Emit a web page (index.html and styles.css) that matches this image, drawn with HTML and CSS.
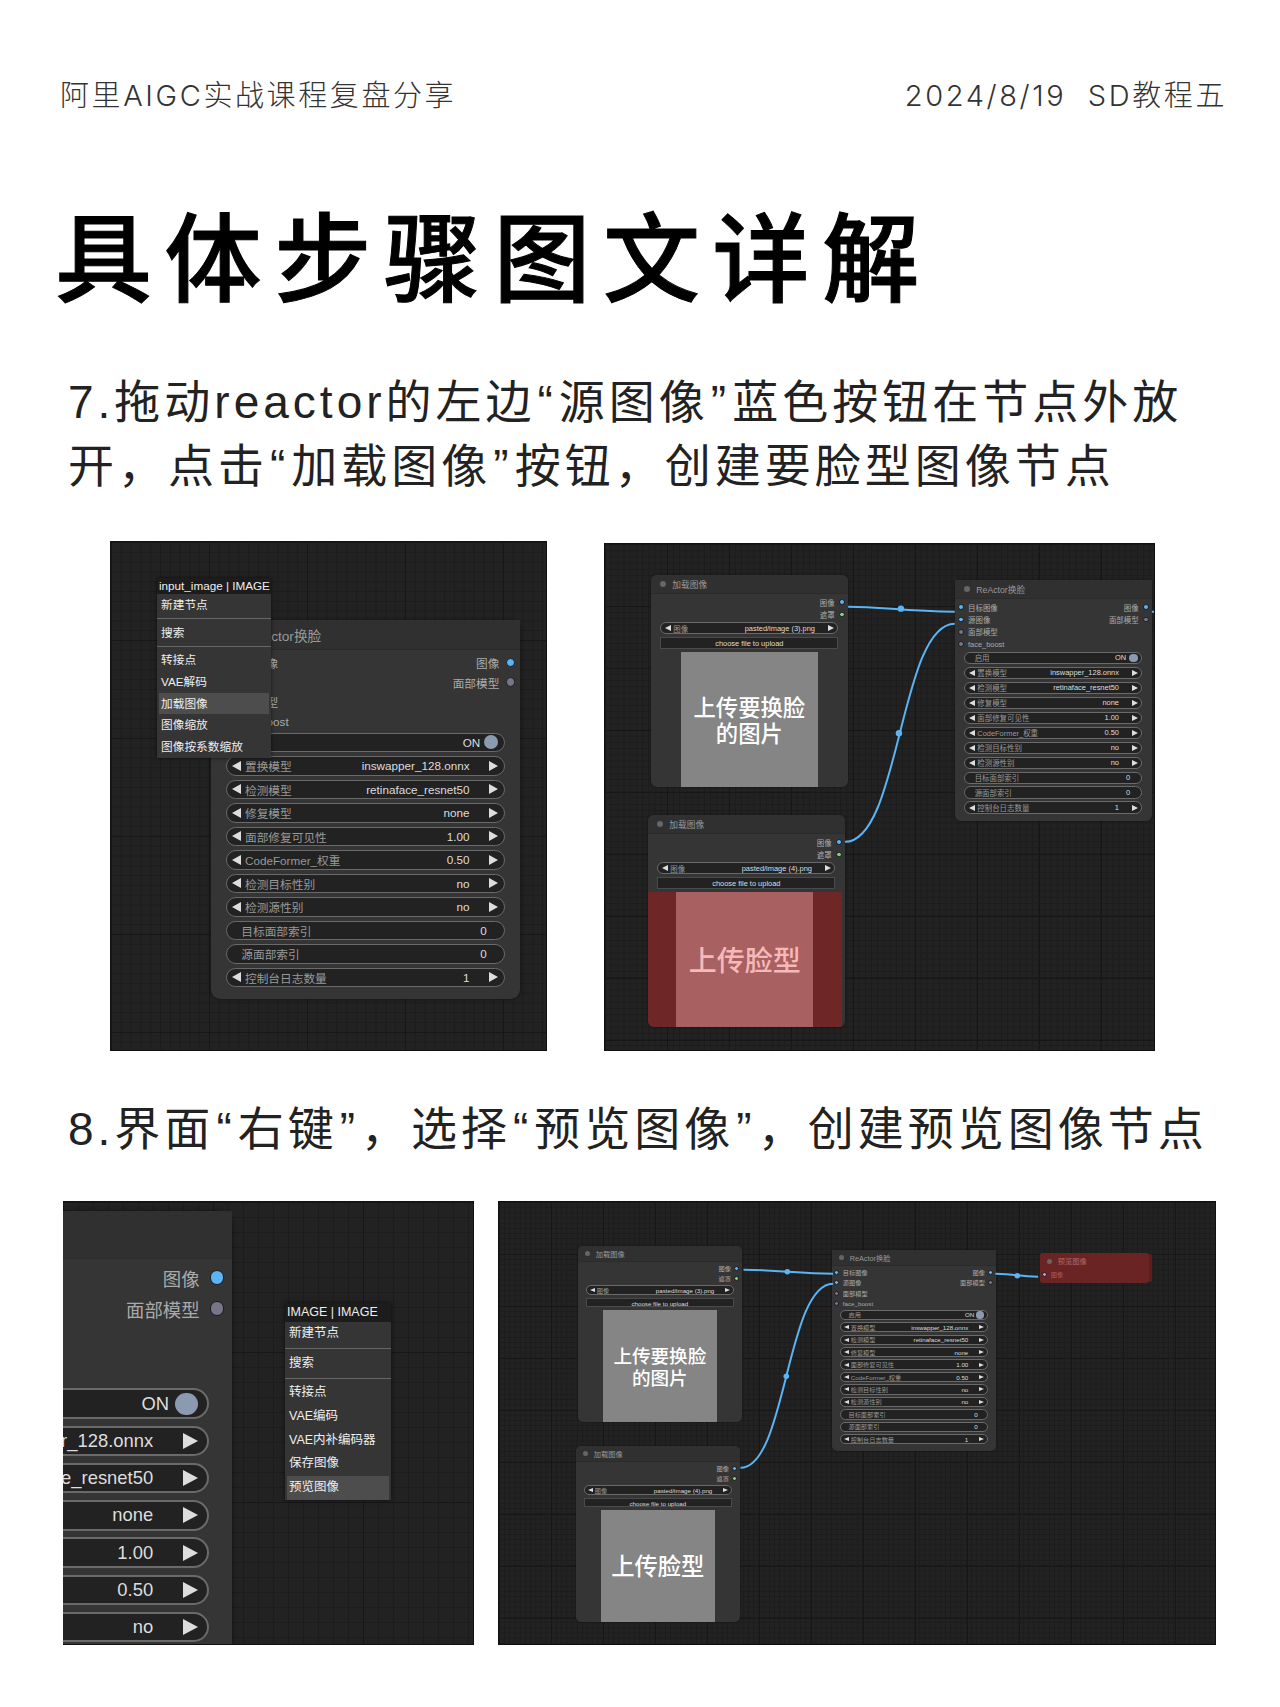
FILE: index.html
```html
<!DOCTYPE html>
<html lang="zh-CN">
<head>
    <meta charset="UTF-8">
    <title>具体步骤图文详解</title>
    <link rel="stylesheet" href="styles.css">
</head>
<body>

    <!-- Cabecera -->
    <header class="top">
        <span>阿里AIGC实战课程复盘分享</span>
        <span>2024/8/19&nbsp;&nbsp;SD教程五</span>
    </header>

    <h1>具体步骤图文详解</h1>

    <p class="step step-7">7.拖动reactor的左边<span class="q">“</span>源图像<span class="q">”</span>蓝色按钮在节点外放<br>开，点击<span class="q">“</span>加载图像<span class="q">”</span>按钮，创建要脸型图像节点</p>

    <div class="shots shots-7">
        <!-- Captura 1 -->
        <div class="canvas canvas-a">
            <div class="node reactor">
                <div class="title"><i class="tdot"></i>ReActor换脸</div>
                <div class="slots">
                    <div class="slot"><i class="dot blue"></i><span>目标图像</span><b>图像</b><i class="dot blue"></i></div>
                    <div class="slot"><i class="dot blue"></i><span>源图像</span><b>面部模型</b><i class="dot grey"></i></div>
                    <div class="slot"><i class="dot grey"></i><span>面部模型</span></div>
                    <div class="slot"><i class="dot grey"></i><span>face_boost</span></div>
                </div>
                <div class="widgets">
                    <div class="widget plain"><span>启用</span><em>ON</em><i class="knob"></i></div>
                    <div class="widget"><i class="al"></i><span>置换模型</span><em>inswapper_128.onnx</em><i class="ar"></i></div>
                    <div class="widget"><i class="al"></i><span>检测模型</span><em>retinaface_resnet50</em><i class="ar"></i></div>
                    <div class="widget"><i class="al"></i><span>修复模型</span><em>none</em><i class="ar"></i></div>
                    <div class="widget"><i class="al"></i><span>面部修复可见性</span><em>1.00</em><i class="ar"></i></div>
                    <div class="widget"><i class="al"></i><span>CodeFormer_权重</span><em>0.50</em><i class="ar"></i></div>
                    <div class="widget"><i class="al"></i><span>检测目标性别</span><em>no</em><i class="ar"></i></div>
                    <div class="widget"><i class="al"></i><span>检测源性别</span><em>no</em><i class="ar"></i></div>
                    <div class="widget plain"><span>目标面部索引</span><em>0</em></div>
                    <div class="widget plain"><span>源面部索引</span><em>0</em></div>
                    <div class="widget"><i class="al"></i><span>控制台日志数量</span><em>1</em><i class="ar"></i></div>
                </div>
            </div>
            <div class="menu menu-a">
                <div class="menu-head">input_image | IMAGE</div>
                <div class="menu-item">新建节点</div>
                <div class="menu-sep"></div>
                <div class="menu-item">搜索</div>
                <div class="menu-sep"></div>
                <div class="menu-item">转接点</div>
                <div class="menu-item">VAE解码</div>
                <div class="menu-item on">加载图像</div>
                <div class="menu-item">图像缩放</div>
                <div class="menu-item">图像按系数缩放</div>
            </div>
        </div>

        <!-- Captura 2 -->
        <div class="canvas canvas-b">
            <svg class="wires" viewBox="0 0 551 500">
                <path d="M244 59 C280 59 300 64 351 64"/>
                <path d="M241 295 C296 295 296 76 351 76"/>
                <path d="M549 64 L551 64"/>
                <circle cx="297" cy="61" r="3.2"/>
                <circle cx="295" cy="186" r="3.2"/>
            </svg>
            <div class="node load load-1">
                <div class="title"><i class="tdot"></i>加载图像</div>
                <div class="slots">
                    <div class="slot"><b>图像</b><i class="dot blue"></i></div>
                    <div class="slot"><b>遮罩</b><i class="dot green"></i></div>
                </div>
                <div class="widget"><i class="al"></i><span>图像</span><em>pasted/image (3).png</em><i class="ar"></i></div>
                <div class="upload">choose file to upload</div>
                <div class="thumb-wrap"><div class="thumb">上传要换脸<br>的图片</div></div>
            </div>
            <div class="node load load-2 picked">
                <div class="title"><i class="tdot"></i>加载图像</div>
                <div class="slots">
                    <div class="slot"><b>图像</b><i class="dot blue"></i></div>
                    <div class="slot"><b>遮罩</b><i class="dot green"></i></div>
                </div>
                <div class="widget"><i class="al"></i><span>图像</span><em>pasted/image (4).png</em><i class="ar"></i></div>
                <div class="upload">choose file to upload</div>
                <div class="thumb-wrap"><div class="thumb big">上传脸型</div></div>
            </div>
            <div class="node reactor">
                <div class="title"><i class="tdot"></i>ReActor换脸</div>
                <div class="slots">
                    <div class="slot"><i class="dot blue"></i><span>目标图像</span><b>图像</b><i class="dot blue"></i></div>
                    <div class="slot"><i class="dot blue"></i><span>源图像</span><b>面部模型</b><i class="dot grey"></i></div>
                    <div class="slot"><i class="dot grey"></i><span>面部模型</span></div>
                    <div class="slot"><i class="dot grey"></i><span>face_boost</span></div>
                </div>
                <div class="widgets">
                    <div class="widget plain"><span>启用</span><em>ON</em><i class="knob"></i></div>
                    <div class="widget"><i class="al"></i><span>置换模型</span><em>inswapper_128.onnx</em><i class="ar"></i></div>
                    <div class="widget"><i class="al"></i><span>检测模型</span><em>retinaface_resnet50</em><i class="ar"></i></div>
                    <div class="widget"><i class="al"></i><span>修复模型</span><em>none</em><i class="ar"></i></div>
                    <div class="widget"><i class="al"></i><span>面部修复可见性</span><em>1.00</em><i class="ar"></i></div>
                    <div class="widget"><i class="al"></i><span>CodeFormer_权重</span><em>0.50</em><i class="ar"></i></div>
                    <div class="widget"><i class="al"></i><span>检测目标性别</span><em>no</em><i class="ar"></i></div>
                    <div class="widget"><i class="al"></i><span>检测源性别</span><em>no</em><i class="ar"></i></div>
                    <div class="widget plain"><span>目标面部索引</span><em>0</em></div>
                    <div class="widget plain"><span>源面部索引</span><em>0</em></div>
                    <div class="widget"><i class="al"></i><span>控制台日志数量</span><em>1</em><i class="ar"></i></div>
                </div>
            </div>
        </div>
    </div>

    <p class="step step-8">8.界面<span class="q">“</span>右键<span class="q">”</span>，选择<span class="q">“</span>预览图像<span class="q">”</span>，创建预览图像节点</p>

    <div class="shots shots-8">
        <!-- Captura 3: nodo recortado por la izquierda -->
        <div class="canvas canvas-c">
            <div class="node reactor">
                <div class="title"></div>
                <div class="slots">
                    <div class="slot"><b>图像</b><i class="dot blue"></i></div>
                    <div class="slot"><b>面部模型</b><i class="dot grey"></i></div>
                    <div class="slot"></div>
                    <div class="slot"></div>
                </div>
                <div class="widgets">
                    <div class="widget plain"><em>ON</em><i class="knob"></i></div>
                    <div class="widget"><em>inswapper_128.onnx</em><i class="ar"></i></div>
                    <div class="widget"><em>retinaface_resnet50</em><i class="ar"></i></div>
                    <div class="widget"><em>none</em><i class="ar"></i></div>
                    <div class="widget"><em>1.00</em><i class="ar"></i></div>
                    <div class="widget"><em>0.50</em><i class="ar"></i></div>
                    <div class="widget"><em>no</em><i class="ar"></i></div>
                </div>
            </div>
            <div class="menu menu-c">
                <div class="menu-head">IMAGE | IMAGE</div>
                <div class="menu-item">新建节点</div>
                <div class="menu-sep"></div>
                <div class="menu-item">搜索</div>
                <div class="menu-sep"></div>
                <div class="menu-item">转接点</div>
                <div class="menu-item">VAE编码</div>
                <div class="menu-item">VAE内补编码器</div>
                <div class="menu-item">保存图像</div>
                <div class="menu-item on">预览图像</div>
            </div>
        </div>

        <!-- Captura 4 -->
        <div class="canvas canvas-d">
            <svg class="wires" viewBox="0 0 718 444">
                <path d="M245 68 C280 68 300 72 335 72"/>
                <path d="M242 267 C288 267 288 82 335 82"/>
                <path d="M498 72 C520 72 520 75 541 75"/>
                <circle cx="289" cy="70" r="2.8"/>
                <circle cx="288" cy="175" r="2.8"/>
                <circle cx="520" cy="74" r="2.8"/>
            </svg>
            <div class="node load load-1">
                <div class="title"><i class="tdot"></i>加载图像</div>
                <div class="slots">
                    <div class="slot"><b>图像</b><i class="dot blue"></i></div>
                    <div class="slot"><b>遮罩</b><i class="dot green"></i></div>
                </div>
                <div class="widget"><i class="al"></i><span>图像</span><em>pasted/image (3).png</em><i class="ar"></i></div>
                <div class="upload">choose file to upload</div>
                <div class="thumb-wrap"><div class="thumb">上传要换脸<br>的图片</div></div>
            </div>
            <div class="node load load-2">
                <div class="title"><i class="tdot"></i>加载图像</div>
                <div class="slots">
                    <div class="slot"><b>图像</b><i class="dot blue"></i></div>
                    <div class="slot"><b>遮罩</b><i class="dot green"></i></div>
                </div>
                <div class="widget"><i class="al"></i><span>图像</span><em>pasted/image (4).png</em><i class="ar"></i></div>
                <div class="upload">choose file to upload</div>
                <div class="thumb-wrap"><div class="thumb big">上传脸型</div></div>
            </div>
            <div class="node reactor">
                <div class="title"><i class="tdot"></i>ReActor换脸</div>
                <div class="slots">
                    <div class="slot"><i class="dot blue"></i><span>目标图像</span><b>图像</b><i class="dot blue"></i></div>
                    <div class="slot"><i class="dot blue"></i><span>源图像</span><b>面部模型</b><i class="dot grey"></i></div>
                    <div class="slot"><i class="dot grey"></i><span>面部模型</span></div>
                    <div class="slot"><i class="dot grey"></i><span>face_boost</span></div>
                </div>
                <div class="widgets">
                    <div class="widget plain"><span>启用</span><em>ON</em><i class="knob"></i></div>
                    <div class="widget"><i class="al"></i><span>置换模型</span><em>inswapper_128.onnx</em><i class="ar"></i></div>
                    <div class="widget"><i class="al"></i><span>检测模型</span><em>retinaface_resnet50</em><i class="ar"></i></div>
                    <div class="widget"><i class="al"></i><span>修复模型</span><em>none</em><i class="ar"></i></div>
                    <div class="widget"><i class="al"></i><span>面部修复可见性</span><em>1.00</em><i class="ar"></i></div>
                    <div class="widget"><i class="al"></i><span>CodeFormer_权重</span><em>0.50</em><i class="ar"></i></div>
                    <div class="widget"><i class="al"></i><span>检测目标性别</span><em>no</em><i class="ar"></i></div>
                    <div class="widget"><i class="al"></i><span>检测源性别</span><em>no</em><i class="ar"></i></div>
                    <div class="widget plain"><span>目标面部索引</span><em>0</em></div>
                    <div class="widget plain"><span>源面部索引</span><em>0</em></div>
                    <div class="widget"><i class="al"></i><span>控制台日志数量</span><em>1</em><i class="ar"></i></div>
                </div>
            </div>
            <div class="node preview">
                <div class="title"><i class="tdot"></i>预览图像</div>
                <div class="slot"><i class="dot lilac"></i><span>图像</span></div>
            </div>
        </div>
    </div>

</body>
</html>
```

FILE: styles.css
```css
/* Reset */
* {
    margin: 0;
    padding: 0;
    box-sizing: border-box;
}

body {
    width: 1280px;
    height: 1707px;
    background-color: #fff;
    color: #111;
    font-family: 'Liberation Sans', 'Noto Sans CJK SC', sans-serif;
    overflow: hidden;
}

/* Textos de la página */
.top {
    display: flex;
    justify-content: space-between;
    padding: 76px 53px 0 60px;
    height: 118px;
    font-family: Inter, 'Noto Sans CJK SC', sans-serif;
    font-size: 29px;
    font-weight: 300;
    letter-spacing: 2.6px;
    line-height: 40px;
    color: #333;
}

h1 {
    margin: 79px 0 0 55px;
    font-family: 'Noto Sans CJK SC', sans-serif;
    font-size: 97px;
    font-weight: 500;
    line-height: 110px;
    letter-spacing: 12.6px;
    color: #000;
    -webkit-text-stroke: 1px #000;
}

.step {
    font-size: 46px;
    line-height: 64px;
    letter-spacing: 4px;
    color: #222;
    white-space: nowrap;
}

.q {
    padding: 0 2px;
}

.step-7 {
    margin: 63px 0 0 68px;
}

.step-8 {
    margin: 46px 0 0 68px;
}

/* Filas de capturas */
.shots {
    display: flex;
    align-items: flex-start;
}

.shots-7 {
    margin-top: 43px;
    padding-left: 110px;
    gap: 57px;
}

.shots-8 {
    margin-top: 40px;
    padding-left: 63px;
    gap: 24px;
}

/* Lienzo de nodos */
.canvas {
    position: relative;
    overflow: hidden;
    flex: none;
    background-color: #222;
    background-image:
        linear-gradient(#171717 1px, transparent 1px),
        linear-gradient(90deg, #171717 1px, transparent 1px),
        linear-gradient(#1c1c1c 1px, transparent 1px),
        linear-gradient(90deg, #1c1c1c 1px, transparent 1px);
    border: 1px solid #111;
}

.canvas-a {
    width: 437px;
    height: 510px;
    font-size: 11.7px;
    background-size: 98px 98px, 98px 98px, 9.8px 9.8px, 9.8px 9.8px;
}

.canvas-b {
    width: 551px;
    height: 508px;
    margin-top: 2px;
    font-size: 7.45px;
    background-size: 62px 62px, 62px 62px, 6.2px 6.2px, 6.2px 6.2px;
}

.canvas-c {
    width: 411px;
    height: 444px;
    font-size: 18.4px;
    background-size: 150px 150px, 150px 150px, 15px 15px, 15px 15px;
    border-left: 0;
}

.canvas-d {
    width: 718px;
    height: 444px;
    font-size: 6.2px;
    background-size: 52px 52px, 52px 52px, 5.2px 5.2px, 5.2px 5.2px;
}

.wires {
    position: absolute;
    left: 0;
    top: 0;
    width: 100%;
    height: 100%;
    z-index: 2;
    fill: #5ab4f5;
}

.wires path {
    fill: none;
    stroke: #5ab4f5;
    stroke-width: 2;
}

/* Nodos */
.node {
    position: absolute;
    width: 26.4em;
    background-color: #353535;
    border-radius: .8em;
    color: #aaa;
    box-shadow: 0 0 .3em rgba(0, 0, 0, .5);
}

.canvas-a .reactor { left: 100px; top: 78px; }
.canvas-b .reactor { left: 350px; top: 36px; }
.canvas-c .reactor { left: -317px; top: 9px; }
.canvas-d .reactor { left: 333px; top: 48px; }

.canvas-b .load-1 { left: 46px; top: 31px; }
.canvas-b .load-2 { left: 43px; top: 271px; }
.canvas-d .load-1 { left: 79px; top: 44px; }
.canvas-d .load-2 { left: 77px; top: 244px; }

.load {
    display: flex;
    flex-direction: column;
    height: 28.4em;
    overflow: hidden;
}

.title {
    display: flex;
    align-items: center;
    font-size: 1.17em;
    height: 2.22em;
    padding-left: 1em;
    color: #999;
    background-color: #303030;
    border-bottom: 1px solid #2b2b2b;
}

.tdot {
    width: .7em;
    height: .7em;
    margin-right: .75em;
    border-radius: 50%;
    background-color: #666;
}

.slots {
    padding-top: .2em;
    margin-bottom: .16em;
}

.slot {
    display: flex;
    align-items: center;
    height: 1.67em;
    padding: 0 .4em;
}

.slot span {
    margin-left: .55em;
}

.slot b {
    margin-left: auto;
    margin-right: .55em;
    font-weight: 400;
}

.dot {
    flex: none;
    width: .8em;
    height: .8em;
    border-radius: 50%;
    border: .1em solid #1c1c1c;
}

.blue { background-color: #5ab4f5; }
.green { background-color: #7fd07f; }
.grey { background-color: #77758a; }
.lilac { background-color: #b39ddb; }

/* Widgets */
.widgets {
    display: flex;
    flex-direction: column;
    gap: .34em;
    padding-bottom: 1em;
}

.canvas-c .widgets {
    gap: .355em;
}

.widget {
    display: flex;
    align-items: center;
    justify-content: flex-end;
    flex: none;
    height: 1.67em;
    margin: 0 1.25em;
    padding: 0 .5em;
    overflow: hidden;
    white-space: nowrap;
    border: .12em solid #6a6a6a;
    border-radius: .9em;
    background-color: #222;
    color: #999;
}

.widget span {
    margin-right: auto;
    margin-left: .3em;
}

.widget em {
    flex: none;
    font-style: normal;
    color: #ddd;
    margin-right: 1.7em;
}

.canvas-c .widget em {
    margin-right: 1.6em;
}

.widget.plain {
    padding-left: 1.25em;
}

.widget.plain span {
    margin-left: 0;
}

.widget.plain em,
.canvas-c .widget.plain em {
    margin-right: 1em;
}

.al, .ar {
    flex: none;
    width: 0;
    height: 0;
    border-top: .45em solid transparent;
    border-bottom: .45em solid transparent;
}

.al {
    border-right: .85em solid #ddd;
}

.ar {
    border-left: .85em solid #ddd;
}

.knob {
    flex: none;
    width: 1.2em;
    height: 1.2em;
    margin-left: -.65em;
    border-radius: 50%;
    background-color: #8a9bb0;
}

.upload {
    flex: none;
    height: 1.6em;
    margin: .35em 1.25em 0;
    line-height: 1.5em;
    text-align: center;
    color: #ddd;
    background-color: #222;
    border: 1px solid #4a4a4a;
}

.thumb-wrap {
    flex: 1;
    display: flex;
    justify-content: center;
    margin-top: .4em;
    min-height: 0;
}

.thumb {
    display: flex;
    align-items: center;
    justify-content: center;
    font-size: 3em;
    width: 6.13em;
    line-height: 1.17;
    text-align: center;
    font-weight: 500;
    background-color: #858585;
    color: #fff;
    font-family: 'Noto Sans CJK SC', sans-serif;
}

.thumb.big {
    font-size: 3.76em;
    width: 4.9em;
}

/* Nodo seleccionado en rojo */
.picked .thumb-wrap {
    margin-right: .4em;
    background-color: #6e2626;
}

.picked .thumb {
    background-color: #a86060;
    color: #f5b9b9;
}

/* Nodo de vista previa */
.preview {
    left: 541px;
    top: 51px;
    height: 4.8em;
    width: 17.6em;
    background-color: #6a2424;
    border-radius: .4em;
    color: #a85a5a;
    box-shadow: .7em 0 0 -.2em #5e1e1e;
}

.preview .title {
    background-color: transparent;
    border: 0;
    color: #b06a6a;
}

/* Menú contextual */
.menu {
    position: absolute;
    z-index: 3;
    background-color: #353535;
    color: #eee;
    box-shadow: 0 0 4px rgba(0, 0, 0, .6);
}

.menu-head {
    background-color: #1c1c1c;
    color: #eee;
    white-space: nowrap;
}

.menu-sep {
    height: 1px;
    background-color: #666;
}

.menu-item {
    padding-left: 4px;
    white-space: nowrap;
}

.menu-a {
    left: 46px;
    top: 36px;
    width: 114px;
    font-size: 11.7px;
}

.menu-a .menu-head {
    height: 16px;
    line-height: 16px;
    padding-left: 2px;
}

.menu-a .menu-item {
    height: 21.7px;
    line-height: 21.7px;
}

.menu-a .menu-sep {
    margin: 2.5px 0;
}

.menu-c {
    left: 222px;
    top: 101px;
    width: 106px;
    font-size: 12.5px;
}

.menu-c .menu-head {
    height: 19px;
    line-height: 19px;
    padding-left: 2px;
}

.menu-c .menu-item {
    height: 23.7px;
    line-height: 23.7px;
}

.menu-c .menu-sep {
    margin: 2.5px 0;
}

.menu-item.on {
    margin: 0 2px;
    padding-left: 2px;
    background-color: #4d4d4d;
}
```
